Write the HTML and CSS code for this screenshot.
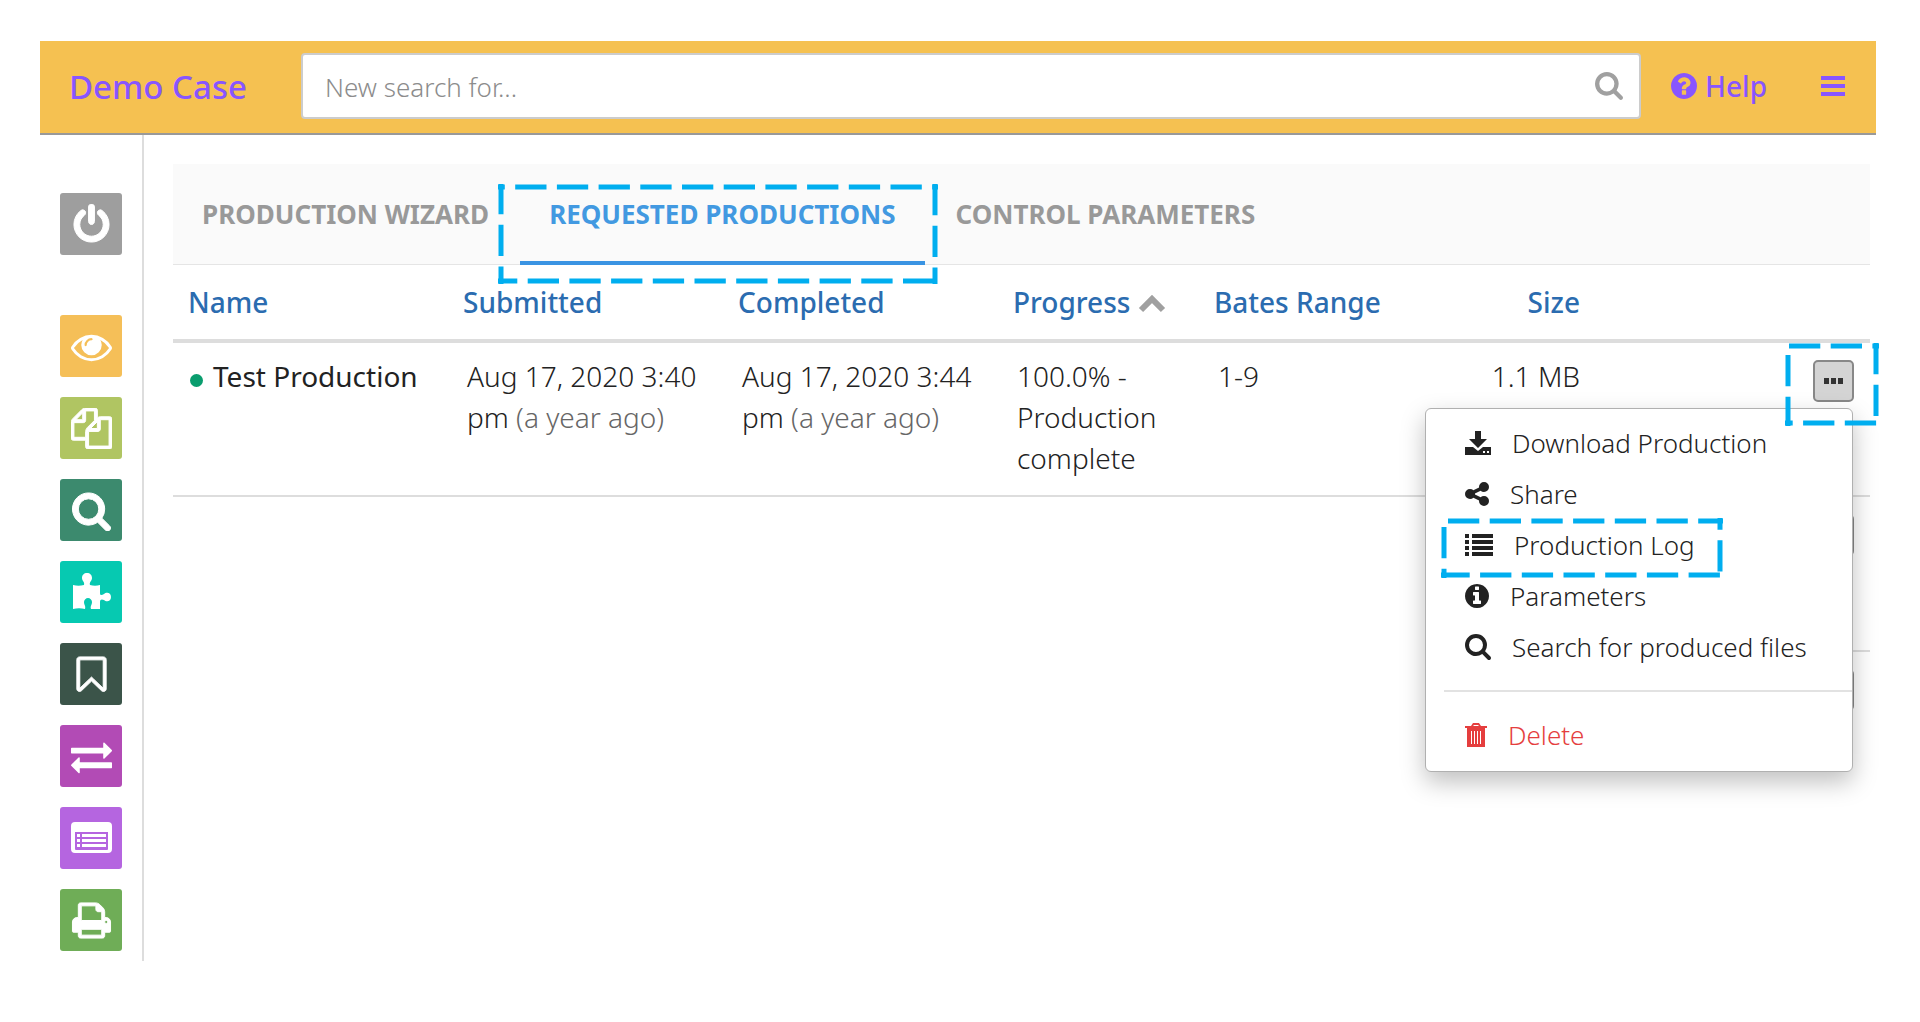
FILE: index.html
```html
<!DOCTYPE html>
<html lang="en">
<head>
    <meta charset="UTF-8">
    <meta name="viewport" content="width=device-width, initial-scale=1.0">
    <title>Demo Case - Requested Productions</title>
    <link rel="stylesheet" href="styles.css">
</head>
<body>
<header class="topbar">
    <a href="#" class="brand">Demo Case</a>
    <form class="search">
        <input type="text" class="search-input" placeholder="New search for..." aria-label="New search">
        <button type="button" class="search-button" aria-label="Search">
            <svg width="28" height="28" viewBox="64 128 1664 1664"><path d="M1216 832q0-185-131.5-316.5t-316.5-131.5-316.5 131.5-131.5 316.5 131.5 316.5 316.5 131.5 316.5-131.5 131.5-316.5zm512 832q0 52-38 90t-90 38q-54 0-90-38l-343-342q-179 124-399 124-143 0-273.5-55.5t-225-150-150-225-55.5-273.5 55.5-273.5 150-225 225-150 273.5-55.5 273.5 55.5 225 150 150 225 55.5 273.5q0 220-124 399l343 343q37 37 37 90z"/></svg>
        </button>
    </form>
    <a href="#" class="help">
        <svg width="26" height="26" viewBox="128 128 1536 1536"><path d="M1024 1376v-192q0-14-9-23t-23-9h-192q-14 0-23 9t-9 23v192q0 14 9 23t23 9h192q14 0 23-9t9-23zm256-672q0-88-55.5-163t-138.5-116-170-41q-243 0-371 213-15 24 8 42l132 100q7 6 19 6 16 0 25-12 53-68 86-92 34-24 86-24 48 0 85.5 26t37.5 59q0 38-20 61t-68 45q-63 28-115.5 86.5t-52.5 125.5v36q0 14 9 23t23 9h192q14 0 23-9t9-23q0-19 21.5-49.5t54.5-49.5q32-18 49-28.5t46-35 44.5-48 28-60.5 12.5-81zm384 192q0 209-103 385.5t-279.5 279.5-385.5 103-385.5-103-279.5-279.5-103-385.5 103-385.5 279.5-279.5 385.5-103 385.5 103 279.5 279.5 103 385.5z"/></svg>
        <span>Help</span>
    </a>
    <button type="button" class="menu-button" aria-label="Menu">
        <svg width="24" height="20" viewBox="0 0 24 20"><path d="M0 0h24v4H0zM0 8h24v4H0zM0 16h24v4H0z"/></svg>
    </button>
</header>

<div class="layout">
    <nav class="sidebar">
        <a href="#" class="side-button power" aria-label="Log out">
            <svg viewBox="0 0 1792 1792"><path d="M1664 896q0 156-61 298t-164 245-245 164-298 61-298-61-245-164-164-245-61-298q0-182 80.5-343t226.5-270q43-32 95.5-25t83.5 50q32 42 24.5 94.5t-49.5 84.5q-98 74-151.5 181t-53.5 228q0 104 40.5 198.5t109.5 163.5 163.5 109.5 198.5 40.5 198.5-40.5 163.5-109.5 109.5-163.5 40.5-198.5q0-121-53.5-228t-151.5-181q-42-32-49.5-84.5t24.5-94.5q31-43 84-50t95 25q146 109 226.5 270t80.5 343zm-640-768v640q0 52-38 90t-90 38-90-38-38-90v-640q0-52 38-90t90-38 90 38 38 90z"/></svg>
        </a>
        <a href="#" class="side-button view" aria-label="View">
            <svg viewBox="0 0 1792 1792"><path fill-rule="evenodd" d="M1664 960q-152-236-381-353 61 104 61 225 0 185-131.5 316.5t-316.5 131.5-316.5-131.5-131.5-316.5q0-121 61-225-229 117-381 353 133 205 333.5 326.5t434.5 121.5 434.5-121.5 333.5-326.5zm-720-384q0-20-14-34t-34-14q-125 0-214.5 89.5t-89.5 214.5q0 20 14 34t34 14 34-14 14-34q0-86 61-147t147-61q20 0 34-14t14-34zm848 384q0 34-20 69-140 230-376.5 368.5t-499.5 138.5-499.5-139-376.5-368q-20-35-20-69t20-69q140-229 376.5-368t499.5-139 499.5 139 376.5 368q20 35 20 69z"/></svg>
        </a>
        <a href="#" class="side-button files" aria-label="Files">
            <svg viewBox="0 0 1792 1792"><path d="M1696 384q40 0 68 28t28 68v1216q0 40-28 68t-68 28h-960q-40 0-68-28t-28-68v-288h-544q-40 0-68-28t-28-68v-672q0-40 20-88t48-76l408-408q28-28 76-48t88-20h416q40 0 68 28t28 68v328q68-40 128-40h416zm-544 213l-299 299h299v-299zm-640-384l-299 299h299v-299zm196 647l316-316v-416h-384v416q0 40-28 68t-68 28h-416v640h512v-256q0-40 20-88t48-76zm956 804v-1152h-384v416q0 40-28 68t-68 28h-416v640h896z"/></svg>
        </a>
        <a href="#" class="side-button find" aria-label="Search">
            <svg viewBox="0 0 1792 1792"><path d="M1216 832q0-185-131.5-316.5t-316.5-131.5-316.5 131.5-131.5 316.5 131.5 316.5 316.5 131.5 316.5-131.5 131.5-316.5zm512 832q0 52-38 90t-90 38q-54 0-90-38l-343-342q-179 124-399 124-143 0-273.5-55.5t-225-150-150-225-55.5-273.5 55.5-273.5 150-225 225-150 273.5-55.5 273.5 55.5 225 150 150 225 55.5 273.5q0 220-124 399l343 343q37 37 37 90z"/></svg>
        </a>
        <a href="#" class="side-button plugins" aria-label="Plugins">
            <svg viewBox="0 0 41 41"><path d="M2 13c4 1 7 1 11 0 1-3-2-4-2-7 0-3 2-5 5-5s5 2 5 5-3 4-2 7c3 1 7 1 10 0v8c0 3 2 2 4 1 2-2 7-2 7 3s-5 5-7 3c-2-1-4-1-4 2v7h-9c-1-3 1-4 1-7 0-2-2-4-4-4s-4 2-4 4c0 3 2 4 1 7-4-1-8-1-12 0z"/></svg>
        </a>
        <a href="#" class="side-button bookmarks" aria-label="Bookmarks">
            <svg viewBox="0 0 1792 1792"><path d="M1408 256h-1024v1242l423-406 89-85 89 85 423 406v-1242zm12-128q23 0 44 9 33 13 52.5 41t19.5 62v1289q0 34-19.5 62t-52.5 41q-19 8-44 8-48 0-83-32l-441-424-441 424q-36 33-83 33-23 0-44-9-33-13-52.5-41t-19.5-62v-1289q0-34 19.5-62t52.5-41q21-9 44-9h1048z"/></svg>
        </a>
        <a href="#" class="side-button transfer" aria-label="Transfer">
            <svg viewBox="0 0 1792 1792"><path d="M1792 1184v192q0 13-9.5 22.5t-22.5 9.5h-1376v192q0 13-9.5 22.5t-22.5 9.5q-12 0-24-10l-319-320q-9-9-9-22 0-14 9-23l320-320q9-9 23-9 13 0 22.5 9.5t9.5 22.5v192h1376q13 0 22.5 9.5t9.5 22.5zm0-544q0 14-9 23l-320 320q-9 9-23 9-13 0-22.5-9.5t-9.5-22.5v-192h-1376q-13 0-22.5-9.5t-9.5-22.5v-192q0-13 9.5-22.5t22.5-9.5h1376v-192q0-14 9-23t23-9q12 0 24 10l319 319q9 9 9 23z"/></svg>
        </a>
        <a href="#" class="side-button lists" aria-label="Lists">
            <svg viewBox="0 0 41 41"><path fill-rule="evenodd" d="M4 4h33a4 4 0 0 1 4 4v23a4 4 0 0 1-4 4H4a4 4 0 0 1-4-4V8a4 4 0 0 1 4-4zM4 14v17a1 1 0 0 0 1 1h31a1 1 0 0 0 1-1V14z"/><path d="M6 16h3v3H6zM11 16h24v3H11zM6 21h3v3H6zM11 21h24v3H11zM6 26h3v3H6zM11 26h24v3H11z"/></svg>
        </a>
        <a href="#" class="side-button print" aria-label="Print">
            <svg viewBox="0 0 1792 1792"><path d="M448 1536h896v-256h-896v256zm0-640h896v-384h-160q-40 0-68-28t-28-68v-160h-640v640zm1152 64q0-26-19-45t-45-19-45 19-19 45 19 45 45 19 45-19 19-45zm128 0v416q0 13-9.5 22.5t-22.5 9.5h-224v160q0 40-28 68t-68 28h-960q-40 0-68-28t-28-68v-160h-224q-13 0-22.5-9.5t-9.5-22.5v-416q0-79 56.5-135.5t135.5-56.5h64v-544q0-40 28-68t68-28h672q40 0 88 20t76 48l152 152q28 28 48 76t20 88v256h64q79 0 135.5 56.5t56.5 135.5z"/></svg>
        </a>
    </nav>

    <main class="content">
        <nav class="tabs">
            <a href="#" class="tab">PRODUCTION WIZARD</a>
            <a href="#" class="tab active">REQUESTED PRODUCTIONS
                <svg class="callout callout-tab" width="440" height="100" viewBox="0 0 440 100">
                    <path d="M0 3H440" stroke-dashoffset="24.5"/>
                    <path d="M437 0V100"/>
                    <path d="M0 97H440" stroke-dashoffset="12"/>
                    <path d="M3 0V100" stroke-dashoffset="1"/>
                </svg>
            </a>
            <a href="#" class="tab">CONTROL PARAMETERS</a>
        </nav>

        <table class="productions">
            <thead>
            <tr>
                <th class="col-date"><a href="#">Name</a></th>
                <th class="col-date"><a href="#">Submitted</a></th>
                <th class="col-date"><a href="#">Completed</a></th>
                <th class="col-progress"><a href="#">Progress <svg class="sort" width="28" height="18" viewBox="0 0 28 18"><path d="M3 15L14 4l11 11" fill="none" stroke="#a0a0a0" stroke-width="6"/></svg></a></th>
                <th class="col-range"><a href="#">Bates Range</a></th>
                <th class="col-size"><a href="#">Size</a></th>
                <th class="col-actions"></th>
            </tr>
            </thead>
            <tbody>
            <tr>
                <td class="name"><span class="status"></span>Test Production</td>
                <td>Aug 17, 2020 3:40 pm <span class="ago">(a year ago)</span></td>
                <td>Aug 17, 2020 3:44 pm <span class="ago">(a year ago)</span></td>
                <td>100.0% - Production complete</td>
                <td>1-9</td>
                <td class="size">1.1 MB</td>
                <td class="actions">
                    <div class="dropdown">
                        <button type="button" class="more" aria-label="Actions">
                            <svg width="20" height="6" viewBox="0 0 20 6"><path d="M0 0h5v6H0zM7 0h5v6H7zM14 0h5v6h-5z"/></svg>
                        </button>
                        <svg class="callout callout-more" width="94" height="83" viewBox="0 0 94 83">
                            <path d="M4 3H94"/>
                            <path d="M91 0V83"/>
                            <path d="M0 80H94" stroke-dashoffset="23.6"/>
                            <path d="M3 12V83"/>
                        </svg>
                        <div class="menu">
                            <button type="button" class="menu-item">
                                <svg width="26" height="24" viewBox="0 0 26 24"><path d="M10 0h6v8h6l-9 9-9-9h6z"/><path fill-rule="evenodd" d="M0 16h8l5 4 5-4h8v8H0zM18 20v2h2v-2zM22 20v2h2v-2z"/></svg>
                                <span>Download Production</span>
                            </button>
                            <button type="button" class="menu-item">
                                <svg width="24" height="24" viewBox="128 128 1536 1536"><path d="M1344 1024q133 0 226.5 93.5t93.5 226.5-93.5 226.5-226.5 93.5-226.5-93.5-93.5-226.5q0-12 2-34l-360-180q-92 86-218 86-133 0-226.5-93.5t-93.5-226.5 93.5-226.5 226.5-93.5q126 0 218 86l360-180q-2-22-2-34 0-133 93.5-226.5t226.5-93.5 226.5 93.5 93.5 226.5-93.5 226.5-226.5 93.5q-126 0-218-86l-360 180q2 22 2 34t-2 34l360 180q92-86 218-86z"/></svg>
                                <span>Share</span>
                            </button>
                            <button type="button" class="menu-item">
                                <svg width="28" height="22" viewBox="0 0 28 22"><path d="M0 0h4v4H0zM7 0h21v4H7zM0 6h4v4H0zM7 6h21v4H7zM0 12h4v4H0zM7 12h21v4H7zM0 18h4v4H0zM7 18h21v4H7z"/></svg>
                                <span>Production Log</span>
                                <svg class="callout callout-log" width="282" height="60" viewBox="0 0 282 60">
                                    <path d="M7 3H282"/>
                                    <path d="M279 0V56" stroke-dashoffset="19.5"/>
                                    <path d="M0 57H282" stroke-dashoffset="2.6"/>
                                    <path d="M3 9V60"/>
                                </svg>
                            </button>
                            <button type="button" class="menu-item">
                                <svg width="24" height="24" viewBox="128 128 1536 1536"><path d="M1152 1376v-160q0-14-9-23t-23-9h-96v-512q0-14-9-23t-23-9h-320q-14 0-23 9t-9 23v160q0 14 9 23t23 9h96v320h-96q-14 0-23 9t-9 23v160q0 14 9 23t23 9h448q14 0 23-9t9-23zm-128-896v-160q0-14-9-23t-23-9h-192q-14 0-23 9t-9 23v160q0 14 9 23t23 9h192q14 0 23-9t9-23zm640 416q0 209-103 385.5t-279.5 279.5-385.5 103-385.5-103-279.5-279.5-103-385.5 103-385.5 279.5-279.5 385.5-103 385.5 103 279.5 279.5 103 385.5z"/></svg>
                                <span>Parameters</span>
                            </button>
                            <button type="button" class="menu-item">
                                <svg width="26" height="26" viewBox="64 128 1664 1664"><path d="M1216 832q0-185-131.5-316.5t-316.5-131.5-316.5 131.5-131.5 316.5 131.5 316.5 316.5 131.5 316.5-131.5 131.5-316.5zm512 832q0 52-38 90t-90 38q-54 0-90-38l-343-342q-179 124-399 124-143 0-273.5-55.5t-225-150-150-225-55.5-273.5 55.5-273.5 150-225 225-150 273.5-55.5 273.5 55.5 225 150 150 225 55.5 273.5q0 220-124 399l343 343q37 37 37 90z"/></svg>
                                <span>Search for produced files</span>
                            </button>
                            <hr class="divider">
                            <button type="button" class="menu-item delete">
                                <svg width="22" height="24" viewBox="0 0 22 24"><path fill-rule="evenodd" d="M8 0h6l2 3h6v2h-2v19H2V5H0V3h6zM8 3h6l-1-1H9zM6 8v13h1V8zM9 8v13h1V8zM12 8v13h1V8zM15 8v13h1V8z"/></svg>
                                <span>Delete</span>
                            </button>
                        </div>
                    </div>
                </td>
            </tr>
            <tr class="blank">
                <td colspan="6"></td>
                <td class="actions"><button type="button" class="more" aria-label="Actions"></button></td>
            </tr>
            <tr class="blank last">
                <td colspan="6"></td>
                <td class="actions"><button type="button" class="more" aria-label="Actions"></button></td>
            </tr>
            </tbody>
        </table>
    </main>
</div>
</body>
</html>
```
FILE: styles.css
```css
* {
    box-sizing: border-box;
}

body {
    margin: 0;
    padding: 41px 44px 41px 40px;
    background-color: #fff;
    font-family: "Noto Sans", "Segoe UI", sans-serif;
    font-size: 28px;
    color: #222;
}

a {
    text-decoration: none;
    color: inherit;
}

button {
    font-family: inherit;
    padding: 0;
    border: none;
    background: none;
    cursor: pointer;
}

svg {
    display: block;
    flex-shrink: 0;
    fill: currentColor;
}

/* Top bar */
.topbar {
    display: flex;
    align-items: center;
    height: 94px;
    padding: 0 31px 2px 29px;
    background-color: #f5c151;
    border-bottom: 2px solid #999;
    color: #8855ff;
    font-weight: 500;
}

.brand {
    width: 232px;
    font-size: 33px;
    white-space: nowrap;
}

.search {
    display: flex;
    flex: 1;
    align-items: center;
    height: 66px;
    padding: 0 16px 0 22px;
    background-color: #fff;
    border: 2px solid #ccc;
    border-radius: 4px;
}

.search-input {
    flex: 1;
    min-width: 0;
    padding: 2px 0 0;
    border: none;
    outline: none;
    background: none;
    font-family: inherit;
    font-size: 26px;
    color: #333;
}

.search-input::placeholder {
    color: #8c8c8c;
    font-weight: 300;
    opacity: 1;
}

.search-button {
    color: #a0a0a0;
}

.help {
    display: flex;
    align-items: center;
    gap: 8px;
    margin: 0 54px 0 30px;
}

.menu-button {
    color: #8855ff;
}

/* Sidebar */
.layout {
    display: flex;
}

.sidebar {
    display: flex;
    flex-direction: column;
    gap: 20px;
    padding: 58px 20px 10px;
    border-right: 2px solid #ddd;
}

.side-button {
    display: flex;
    justify-content: center;
    align-items: center;
    width: 62px;
    height: 62px;
    border-radius: 3px;
    color: #fff;
}

.side-button svg {
    width: 41px;
    height: 41px;
}

.files path,
.bookmarks path,
.power path,
.find path,
.print path {
    stroke: currentColor;
    stroke-width: 1px;
    vector-effect: non-scaling-stroke;
}

.power {
    margin-bottom: 40px;
    background-color: #9e9e9e;
}

.view {
    background-color: #f5bf58;
}

.files {
    background-color: #b0c562;
}

.find {
    background-color: #3c8a6e;
}

.plugins {
    background-color: #06c9b1;
}

.bookmarks {
    background-color: #3b5449;
}

.transfer {
    background-color: #b24bb5;
}

.lists {
    background-color: #b565e0;
}

.print {
    background-color: #6fad57;
}

/* Content */
.content {
    flex: 1;
    min-width: 0;
    padding: 29px 6px 0 29px;
}

.tabs {
    display: flex;
    gap: 2px;
    height: 101px;
    background-color: #fafafa;
    border-bottom: 1px solid #e5e5e5;
}

.tab {
    position: relative;
    padding: 0 29px;
    height: 101px;
    line-height: 101px;
    font-size: 26px;
    font-weight: bold;
    color: #999;
    white-space: nowrap;
}

.tab.active {
    color: #4299e1;
    border-bottom: 4px solid #3a94e3;
}

.productions {
    width: 100%;
    table-layout: fixed;
    border-collapse: collapse;
    line-height: 41px;
    font-weight: 300;
}

.productions th {
    height: 76px;
    padding: 0 15px;
    border-bottom: 4px solid #ddd;
    text-align: left;
    font-weight: 500;
    color: #2b6cb0;
    white-space: nowrap;
}

.productions td {
    height: 155px;
    padding: 13px 15px 16px 19px;
    border-bottom: 2px solid #ddd;
    vertical-align: top;
}

.col-date {
    width: 275px;
}

.col-progress {
    width: 201px;
}

.col-range {
    width: 211px;
}

.col-size {
    width: 185px;
}

.productions .col-size,
.productions .size {
    text-align: right;
}

.sort {
    display: inline-block;
}

.productions .name {
    padding-left: 17px;
    font-weight: 400;
    white-space: nowrap;
}

.status {
    display: inline-block;
    width: 13px;
    height: 13px;
    margin-right: 10px;
    border-radius: 50%;
    background-color: #0a9d6e;
}

.ago {
    color: #666;
}

.productions .blank td {
    border-bottom: none;
}

.productions .blank .actions {
    border-bottom: 2px solid #ddd;
}

.productions .blank.last .actions {
    border-bottom: none;
}

.productions .actions {
    padding: 17px 16px 0 0;
}

.dropdown {
    position: relative;
    width: 41px;
    margin-left: auto;
}

.more {
    display: flex;
    justify-content: center;
    align-items: center;
    width: 41px;
    height: 42px;
    margin-left: auto;
    background-color: #d4d4d4;
    border: 2px solid #888;
    border-radius: 5px;
    color: #333;
}

/* Dropdown menu */
.menu {
    position: absolute;
    top: 48px;
    right: 1px;
    z-index: 1;
    width: 428px;
    padding: 8px 0 11px;
    background-color: #fff;
    border: 1px solid #b0b0b0;
    border-radius: 6px;
    box-shadow: 0 10px 24px rgba(0, 0, 0, 0.25);
}

.menu-item {
    position: relative;
    display: flex;
    align-items: center;
    gap: 21px;
    width: 100%;
    height: 51px;
    padding-left: 39px;
    font-size: 26px;
    font-weight: 300;
    color: #222;
    white-space: nowrap;
}

.divider {
    margin: 18px 0 17px 18px;
    border: none;
    border-top: 2px solid #e2e2e2;
}

.menu-item.delete {
    color: #e53e3e;
}

/* Dashed callouts */
.callout {
    position: absolute;
    z-index: 2;
    pointer-events: none;
    fill: none;
    stroke: #00aeef;
    stroke-width: 5;
    stroke-dasharray: 31.3 10.4;
}

.callout-tab {
    top: 20px;
    left: -22px;
}

.callout-more {
    top: -17px;
    left: -28px;
}

.callout-log {
    top: -1px;
    left: 15px;
}
```
